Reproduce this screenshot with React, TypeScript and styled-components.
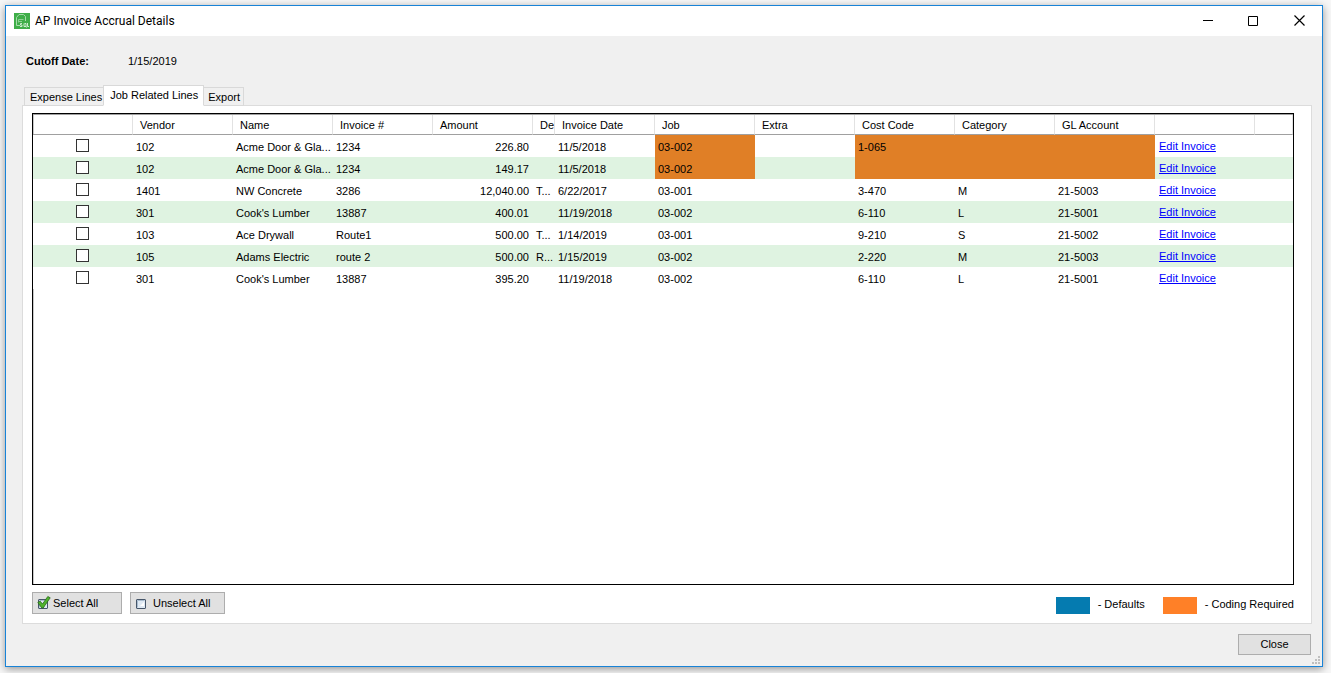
import React from "react";
import styled, { createGlobalStyle } from "styled-components";

const Global = createGlobalStyle`
  * { box-sizing: border-box; }
  body {
    margin: 0;
    background: #f7f7f7;
    color: #000;
    font: 11px/14px "Liberation Sans", Arial, sans-serif;
  }
  button { font: inherit; color: inherit; }
`;

const Desktop = styled.div`
  display: flex;
  min-height: 100vh;
  padding: 5px 8px 6px 5px;
`;

const Window = styled.main`
  flex: 1;
  min-width: 0;
  display: flex;
  flex-direction: column;
  border: 1px solid #1883d7;
  background: #f0f0f0;
  box-shadow: 0 2px 8px rgba(0, 0, 0, 0.4);
`;

const TitleBar = styled.header`
  display: flex;
  align-items: center;
  height: 30px;
  padding-left: 8px;
  background: #fff;
`;

const Title = styled.h1`
  flex: 1;
  margin: 0 0 0 5px;
  font: 400 12px/16px Roboto, "Segoe UI", sans-serif;
`;

const CaptionButton = styled.button`
  display: grid;
  place-items: center;
  width: 46px;
  height: 30px;
  padding: 0 0 2px;
  border: 0;
  background: none;
`;

const Cutoff = styled.dl`
  display: flex;
  gap: 39px;
  margin: 0;
  padding: 18px 20px 17px;
  dt { font-weight: 700; }
  dd { margin: 0; }
`;

const TabList = styled.div`
  display: flex;
  align-items: flex-end;
  height: 21px;
  padding-left: 2px;
  margin: 0 10px -1px 16px;
`;

const Tab = styled.button<{ $active?: boolean }>`
  position: relative;
  height: ${(p) => (p.$active ? 21 : 19)}px;
  padding: ${(p) => (p.$active ? "0 5px 2px 6px" : "0 1px 0 5px")};
  border: 1px solid #d9d9d9;
  border-bottom-color: ${(p) => (p.$active ? "#fff" : "#d9d9d9")};
  border-right-width: ${(p) => (p.$active ? 1 : 0)}px;
  background: ${(p) => (p.$active ? "#fff" : "#f0f0f0")};
  white-space: nowrap;
  &:last-child {
    padding: 0 3px 0 4px;
    border-right-width: 1px;
    border-left-width: 0;
  }
`;

const TabPage = styled.section`
  flex: 1;
  display: flex;
  flex-direction: column;
  margin: 0 10px 0 16px;
  padding: 7px 17px 9px 9px;
  border: 1px solid #dcdcdc;
  background: #fff;
`;

const GridBox = styled.div`
  flex: 1;
  border: 1px solid #000;
  box-shadow: inset 0 1px 0 #a0a0a0, inset 1px 0 0 #c8c8c8;
  overflow: hidden;
`;

const Table = styled.table`
  width: 100%;
  margin-top: 1px;
  border-collapse: separate;
  border-spacing: 0;
  table-layout: fixed;
`;

const HeadCell = styled.th`
  height: 20px;
  padding: 0 0 0 7px;
  border-right: 1px solid #e2e2e2;
  border-bottom: 1px solid #a0a0a0;
  font-weight: 400;
  text-align: left;
  white-space: nowrap;
  overflow: hidden;
`;

const Row = styled.tr`
  background: #fff;
  &:nth-child(even) { background: #dff3e1; }
`;

const Cell = styled.td<{ $align?: "right" | "center"; $flag?: boolean }>`
  height: 22px;
  padding: 2px 4px 0 3px;
  text-align: ${(p) => p.$align ?? "left"};
  background: ${(p) => (p.$flag ? "#e07f26" : "transparent")};
  white-space: nowrap;
  overflow: hidden;
`;

const Check = styled.input`
  appearance: none;
  display: block;
  width: 13px;
  height: 13px;
  margin: 0 auto 4px;
  border: 1px solid #333;
  background: #fff;
`;

const EditLink = styled.a`
  display: block;
  margin-bottom: 2px;
  padding-left: 1px;
  color: #00f;
  text-decoration: underline;
`;

const Footer = styled.div`
  display: flex;
  align-items: flex-start;
  gap: 8px;
  padding-top: 7px;
`;

const Button = styled.button<{ $width: number }>`
  display: flex;
  align-items: center;
  width: ${(p) => p.$width}px;
  height: 22px;
  padding: 0 4px;
  border: 1px solid #adadad;
  background: #e1e1e1;
  white-space: nowrap;
`;

const Legend = styled.ul`
  display: flex;
  gap: 18px;
  margin: 5px 0 0 auto;
  padding: 0;
  list-style: none;
`;

const LegendItem = styled.li`
  display: flex;
  gap: 8px;
`;

const Swatch = styled.span<{ $color: string }>`
  width: 34px;
  height: 17px;
  background: ${(p) => p.$color};
`;

const DialogFooter = styled.footer`
  position: relative;
  display: flex;
  justify-content: flex-end;
  padding: 10px 11px 11px;
`;

const CloseButton = styled(Button)`
  justify-content: center;
  height: 21px;
  padding-bottom: 1px;
`;

const Grip = styled.svg`
  position: absolute;
  right: 2px;
  bottom: 2px;
`;

const ButtonIcon = styled.svg`
  flex: none;
  margin-right: 2px;
`;

const columns: [string, number?][] = [
  ["", 100], ["Vendor", 100], ["Name", 100], ["Invoice #", 100], ["Amount", 100],
  ["De", 22], ["Invoice Date", 100], ["Job", 100], ["Extra", 100], ["Cost Code", 100],
  ["Category", 100], ["GL Account", 100], ["", 100], [""],
];

type Line = {
  vendor: string; name: string; invoice: string; amount: string; desc?: string;
  date: string; job: string; cost: string; category?: string; gl?: string; flagged?: boolean;
};

const lines: Line[] = [
  { vendor: "102", name: "Acme Door & Gla...", invoice: "1234", amount: "226.80", date: "11/5/2018", job: "03-002", cost: "1-065", flagged: true },
  { vendor: "102", name: "Acme Door & Gla...", invoice: "1234", amount: "149.17", date: "11/5/2018", job: "03-002", cost: "", flagged: true },
  { vendor: "1401", name: "NW Concrete", invoice: "3286", amount: "12,040.00", desc: "T...", date: "6/22/2017", job: "03-001", cost: "3-470", category: "M", gl: "21-5003" },
  { vendor: "301", name: "Cook's Lumber", invoice: "13887", amount: "400.01", date: "11/19/2018", job: "03-002", cost: "6-110", category: "L", gl: "21-5001" },
  { vendor: "103", name: "Ace Drywall", invoice: "Route1", amount: "500.00", desc: "T...", date: "1/14/2019", job: "03-001", cost: "9-210", category: "S", gl: "21-5002" },
  { vendor: "105", name: "Adams Electric", invoice: "route 2", amount: "500.00", desc: "R...", date: "1/15/2019", job: "03-002", cost: "2-220", category: "M", gl: "21-5003" },
  { vendor: "301", name: "Cook's Lumber", invoice: "13887", amount: "395.20", date: "11/19/2018", job: "03-002", cost: "6-110", category: "L", gl: "21-5001" },
];

const AppIcon = () => (
  <svg width="16" height="16" viewBox="0 0 16 16" fill="none" aria-hidden="true">
    <rect width="16" height="16" fill="#3fae49" />
    <path d="M2.5 12.5V4.5L5 1.5H9.5L11.5 3.5V8M2.5 12.5H6" stroke="#a6dcaa" />
    <path d="M4.5 6.5H9.5M4.5 6.5V9.5M4.5 8.5H8" stroke="#8fd095" />
    <path d="M8 10.500H6.500V12H8V13.500H6M10.500 10.500H12V13.500H10V10.500M13.500 10V13.500H15M11.500 13L12.500 14.500" stroke="#cdeccf" />
  </svg>
);

const Box = () => (
  <>
    <rect x="1.5" y="4.5" width="9" height="9" rx="0.5" fill="#dfe9f3" stroke="#46566a" />
    <path d="M2.5 12.5V5.5H9.5" fill="none" stroke="#a9bccf" />
    <path d="M5 11L9 7V11Z" fill="#fff" />
  </>
);

export default function App() {
  return (
    <>
      <Global />
      <Desktop>
        <Window>
          <TitleBar>
            <AppIcon />
            <Title>AP Invoice Accrual Details</Title>
            <CaptionButton aria-label="Minimize">
              <svg width="11" height="11" stroke="#000"><path d="M1 5.5H11" /></svg>
            </CaptionButton>
            <CaptionButton aria-label="Maximize">
              <svg width="11" height="11" stroke="#000" fill="none"><path d="M.5 1.5H9.5V10.5H.5Z" /></svg>
            </CaptionButton>
            <CaptionButton aria-label="Close window">
              <svg width="11" height="11" stroke="#000" strokeWidth="1.2"><path d="M.5.5L10.5 10.5M10.5.5L.5 10.5" /></svg>
            </CaptionButton>
          </TitleBar>

          <Cutoff>
            <dt>Cutoff Date:</dt>
            <dd>1/15/2019</dd>
          </Cutoff>

          <TabList role="tablist">
            <Tab role="tab">Expense Lines</Tab>
            <Tab role="tab" aria-selected="true" $active>Job Related Lines</Tab>
            <Tab role="tab">Export</Tab>
          </TabList>

          <TabPage>
            <GridBox>
              <Table>
                <colgroup>
                  {columns.map(([, width], i) => <col key={i} width={width} />)}
                </colgroup>
                <thead>
                  <tr>{columns.map(([label], i) => <HeadCell key={i}>{label}</HeadCell>)}</tr>
                </thead>
                <tbody>
                  {lines.map((l, i) => (
                    <Row key={i}>
                      <Cell $align="center"><Check type="checkbox" aria-label={`Select line ${i + 1}`} /></Cell>
                      <Cell>{l.vendor}</Cell>
                      <Cell>{l.name}</Cell>
                      <Cell>{l.invoice}</Cell>
                      <Cell $align="right">{l.amount}</Cell>
                      <Cell>{l.desc}</Cell>
                      <Cell>{l.date}</Cell>
                      <Cell $flag={l.flagged}>{l.job}</Cell>
                      <Cell />
                      <Cell $flag={l.flagged}>{l.cost}</Cell>
                      <Cell $flag={l.flagged}>{l.category}</Cell>
                      <Cell $flag={l.flagged}>{l.gl}</Cell>
                      <Cell><EditLink href="#">Edit Invoice</EditLink></Cell>
                      <Cell />
                    </Row>
                  ))}
                </tbody>
              </Table>
            </GridBox>
            <Footer>
              <Button $width={90}>
                <ButtonIcon width="14" height="16" aria-hidden="true">
                  <Box />
                  <path d="M.8 7.5L3.2 6.200L5.5 9L10.800 1.500L13.200 2.800L6.200 13H4.800Z" fill="#4fb32e" stroke="#2a6a1a" strokeWidth="0.8" />
                </ButtonIcon>
                Select All
              </Button>
              <Button $width={95}>
                <ButtonIcon width="16" height="16" aria-hidden="true"><Box /></ButtonIcon>
                Unselect All
              </Button>
              <Legend>
                <LegendItem><Swatch $color="#057bb0" />- Defaults</LegendItem>
                <LegendItem><Swatch $color="#ff8027" />- Coding Required</LegendItem>
              </Legend>
            </Footer>
          </TabPage>

          <DialogFooter>
            <CloseButton $width={73}>Close</CloseButton>
            <Grip width="8" height="8" fill="#bfbfbf" aria-hidden="true">
              <path d="M6 0h2v2h-2zM3 3h2v2h-2zM6 3h2v2h-2zM0 6h2v2h-2zM3 6h2v2h-2zM6 6h2v2h-2z" />
            </Grip>
          </DialogFooter>
        </Window>
      </Desktop>
    </>
  );
}
